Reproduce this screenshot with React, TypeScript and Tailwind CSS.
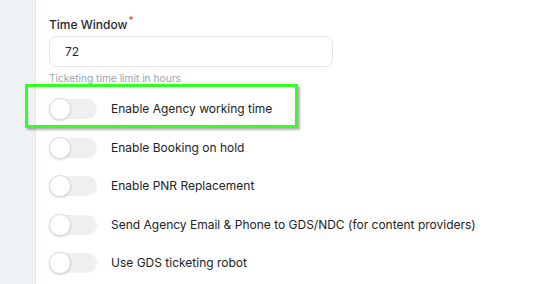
const options = [
  'Enable Agency working time',
  'Enable Booking on hold',
  'Enable PNR Replacement',
  'Send Agency Email & Phone to GDS/NDC (for content providers)',
  'Use GDS ticketing robot',
]

function Toggle() {
  return (
    <span className="relative flex h-[20px] w-[48px] shrink-0 items-center rounded-full bg-[#efefef]">
      <span className="absolute left-0 h-[22px] w-[22px] rounded-full border border-[#d9dce1] bg-white shadow-[0_1px_2px_rgba(0,0,0,0.15)]" />
    </span>
  )
}

export default function App() {
  return (
    <div className="relative flex h-[284px] w-[560px] overflow-hidden bg-white font-['Inter',sans-serif]">
      <aside className="w-[36px] shrink-0 border-r border-[#e3e7ec] bg-[#eef2f6]" />
      <main className="flex-1 pl-[13px] pt-[17px]">
        <label className="block text-[12px] leading-[16px] font-medium text-[#1f2937]">
          Time Window<sup className="ml-[1px] text-[10px] text-[#ef4444]">*</sup>
        </label>
        <div className="mt-[3px] flex h-[31px] w-[284px] items-center rounded-[7px] border border-[#e2e6ec] pl-[15px] text-[12px] text-[#1f2937]">
          72
        </div>
        <p className="mt-[4px] text-[10.2px] leading-[14px] text-[#9ca3af]">Ticketing time limit in hours</p>
        <div className="mt-[14px] flex flex-col gap-[18.5px]">
          {options.map((o) => (
            <div key={o} className="flex h-[20px] items-center gap-[14px]">
              <Toggle />
              <span className="text-[12px] text-[#222]">{o}</span>
            </div>
          ))}
        </div>
      </main>
      <div className="absolute left-[25px] top-[84px] h-[44px] w-[273px] border-[3px] border-[#33ff22] shadow-[2px_2px_2px_rgba(0,0,0,0.3)]" />
    </div>
  )
}
